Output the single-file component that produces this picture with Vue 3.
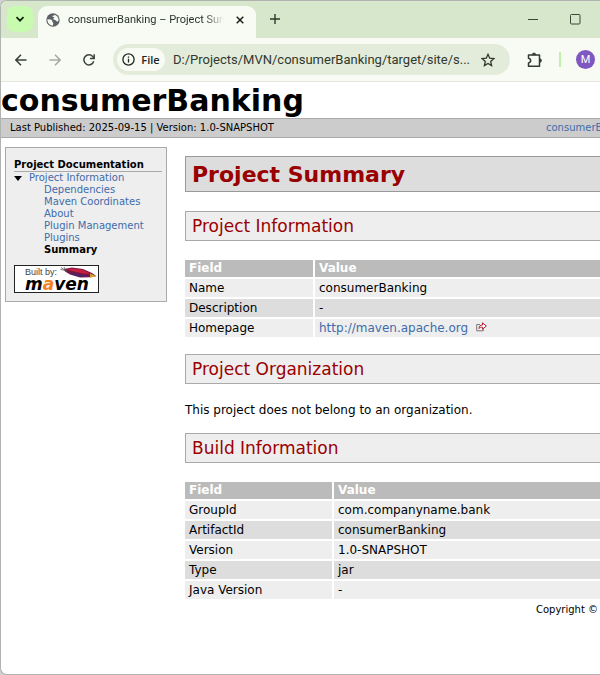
<template>
  <div class="window">
    <div class="tab-strip">
      <button class="tab-search" aria-label="Search tabs">
        <svg width="10" height="10" viewBox="0 0 10 10">
          <path d="M1.5 3.2 5 6.7 8.5 3.2" fill="none" stroke="#10220c" stroke-width="1.7" />
        </svg>
      </button>
      <div class="tab">
        <svg width="14" height="14" viewBox="0 0 14 14">
          <circle cx="7" cy="7" r="6.7" fill="#5c6166" />
          <path
            d="M1.4 6.2 4.6 6.6c1 .2 1.7.6 1.7 1.6v.8c.9.2 1 .7.9 1.4l-.3 2.1C3.7 12.4 1.2 9.6 1.4 6.2z"
            fill="#f8fbf3"
          />
          <path
            d="M8.6 1.7c2.4.8 4 2.8 4 5.5-.2.9-.7 1.3-1.5 1.2-.9-.1-.9-.9-1.5-1.2-.8-.4-2-.2-2.2-1.2-.2-1 .9-1.1.9-1.9-.6-.4-1.7 0-1.8-.8 0-.9 1.3-.5 1.8-.8z"
            fill="#f8fbf3"
          />
        </svg>
        <span class="tab-title">consumerBanking – Project Summary</span>
        <button class="tab-close" aria-label="Close tab">
          <svg width="8" height="8" viewBox="0 0 8 8">
            <path d="M.7.7 7.3 7.3M7.3.7.7 7.3" stroke="#1b1f1a" stroke-width="1.5" />
          </svg>
        </button>
      </div>
      <button class="new-tab" aria-label="New tab">
        <svg width="10" height="10" viewBox="0 0 10 10">
          <path d="M5 0v10M0 5h10" stroke="#2c3a28" stroke-width="1.4" />
        </svg>
      </button>
      <div class="window-buttons">
        <button aria-label="Minimize">
          <svg width="10" height="10" viewBox="0 0 10 10">
            <path d="M0 5.5h10" stroke="#3b4737" />
          </svg>
        </button>
        <button aria-label="Maximize">
          <svg width="11" height="11" viewBox="0 0 11 11">
            <rect x=".5" y=".5" width="9.5" height="9.5" rx="1" fill="none" stroke="#3b4737" />
          </svg>
        </button>
      </div>
    </div>

    <div class="toolbar">
      <button class="nav-btn" aria-label="Back">
        <svg width="12" height="12" viewBox="0 0 12 12">
          <path d="M11.5 6H1M6 .8.9 6 6 11.2" fill="none" stroke="#3a4137" stroke-width="1.5" />
        </svg>
      </button>
      <button class="nav-btn" aria-label="Forward">
        <svg width="12" height="12" viewBox="0 0 12 12">
          <path d="M.5 6H11M6 .8 11.1 6 6 11.2" fill="none" stroke="#a5aaa1" stroke-width="1.5" />
        </svg>
      </button>
      <button class="nav-btn" aria-label="Reload">
        <svg width="12" height="12" viewBox="0 0 12 12">
          <path d="M10.7 7.3A5 5 0 1 1 9.7 2.6L11 4" fill="none" stroke="#3a4137" stroke-width="1.5" />
          <path d="M11.2.3V4.5H7" fill="none" stroke="#3a4137" stroke-width="1.5" />
        </svg>
      </button>
      <div class="omnibox">
        <button class="file-chip">
          <svg width="13" height="13" viewBox="0 0 13 13">
            <circle cx="6.5" cy="6.5" r="5.6" fill="none" stroke="#20261e" stroke-width="1.3" />
            <path d="M6.5 5.8v3.7M6.5 3.4v1.4" stroke="#20261e" stroke-width="1.3" />
          </svg>
          File
        </button>
        <input v-model="url" class="url" type="text" aria-label="Address" />
        <button class="star" aria-label="Bookmark this page">
          <svg width="14" height="14" viewBox="0 0 14 14">
            <path
              d="M7 1.3l1.7 3.9 4.2.4-3.2 2.8.9 4.2L7 10.4l-3.6 2.2.9-4.2L1.1 5.6l4.2-.4z"
              fill="none"
              stroke="#333b30"
              stroke-width="1.3"
            />
          </svg>
        </button>
      </div>
      <button class="extensions" aria-label="Extensions">
        <svg width="16" height="16" viewBox="0 0 16 16">
          <path
            d="M1.5 3h11v11.2h-11V11c2.9-.5 2.9-4.3 0-4.8z"
            fill="none"
            stroke="#333b30"
            stroke-width="1.5"
            stroke-linejoin="round"
          />
          <path d="M5.2 2.8a1.8 1.8 0 0 1 3.6 0zM12.7 6.7a1.8 1.8 0 0 1 0 3.6z" fill="#333b30" stroke="#333b30" stroke-width=".7" />
        </svg>
      </button>
      <span class="divider"></span>
      <button class="avatar" aria-label="Profile">M</button>
    </div>

    <div class="page">
      <div class="banner">consumerBanking</div>
      <div class="breadcrumbs">
        <span>Last Published: 2025-09-15 | Version: 1.0-SNAPSHOT</span>
        <div class="crumb-right"><a href="#">consumerBanking</a></div>
      </div>

      <div class="columns">
        <nav class="left-column">
          <h5>Project Documentation</h5>
          <ul>
            <li>
              <svg class="arrow" width="8" height="5" viewBox="0 0 8 5">
                <path d="M0 0h8L4 5z" fill="#000" />
              </svg>
              <a href="#">Project Information</a>
              <ul>
                <li v-for="item in menu" :key="item">
                  <a href="#">{{ item }}</a>
                </li>
                <li><strong>Summary</strong></li>
              </ul>
            </li>
          </ul>
          <a href="#" class="powered" aria-label="Built by Maven">
            <svg width="85" height="28" viewBox="0 0 85 28">
              <rect x=".5" y=".5" width="84" height="27" fill="#fff" stroke="#222" />
              <text x="11" y="10" class="built">Built by:</text>
              <path d="M50 4l8-1.5 11 1.5 9 4 4 3-5 1.3-11 .3-10-3-5-3z" fill="#7c1546" />
              <path d="M53 4l6-.6 10 1.6 8 4-8-.6-11-2.5z" fill="#c51f3a" />
              <path d="M56 7.2l12 2.9 9 .9-10 1-9-2.4z" fill="#47246b" />
              <path d="M76 8.5l7 3-7 1.1z" fill="#d5a12e" />
              <path d="M47 2.5l6 4M50 2l2.5 5M46.5 4.5l5 .8" stroke="#555" stroke-width=".8" />
              <text x="11" y="25" class="maven">m<tspan fill="#f58220">a</tspan>ven</text>
            </svg>
          </a>
        </nav>

        <main class="body-column">
          <h1>Project Summary</h1>
          <h2>Project Information</h2>
          <table class="project">
            <thead>
              <tr>
                <th>Field</th>
                <th>Value</th>
              </tr>
            </thead>
            <tbody>
              <tr v-for="row in projectRows" :key="row.field">
                <td>{{ row.field }}</td>
                <td v-if="row.link">
                  <a href="#">{{ row.value }}</a>
                  <svg class="external" width="11" height="10" viewBox="0 0 11 10">
                    <path d="M4 2.5H.7v6.3h6.6V7" fill="none" stroke="#777" />
                    <path d="M3 6.5C3 4 4.5 3 6.5 3V.8L10.3 4 6.5 7.2V5.2C5 5 4 5.3 3 6.5z" fill="#fff" stroke="#b02030" />
                  </svg>
                </td>
                <td v-else>{{ row.value }}</td>
              </tr>
            </tbody>
          </table>

          <h2>Project Organization</h2>
          <p>This project does not belong to an organization.</p>

          <h2>Build Information</h2>
          <table class="build">
            <thead>
              <tr>
                <th>Field</th>
                <th>Value</th>
              </tr>
            </thead>
            <tbody>
              <tr v-for="row in buildRows" :key="row.field">
                <td>{{ row.field }}</td>
                <td>{{ row.value }}</td>
              </tr>
            </tbody>
          </table>
        </main>
      </div>

      <footer>Copyright ©</footer>
    </div>
  </div>
</template>

<script setup>
import { ref } from "vue";

const url = ref("D:/Projects/MVN/consumerBanking/target/site/s...");

const menu = [
  "Dependencies",
  "Maven Coordinates",
  "About",
  "Plugin Management",
  "Plugins",
];

const projectRows = [
  { field: "Name", value: "consumerBanking" },
  { field: "Description", value: "-" },
  { field: "Homepage", value: "http://maven.apache.org", link: true },
];

const buildRows = [
  { field: "GroupId", value: "com.companyname.bank" },
  { field: "ArtifactId", value: "consumerBanking" },
  { field: "Version", value: "1.0-SNAPSHOT" },
  { field: "Type", value: "jar" },
  { field: "Java Version", value: "-" },
];
</script>

<style>
body {
  background: #d0d0d0;
}
</style>

<style scoped>
* {
  box-sizing: border-box;
}
.window {
  min-height: 100vh;
  display: flex;
  flex-direction: column;
  border: 1px solid #b0b4ae;
  border-right: none;
  border-radius: 7px 0 0 7px;
  background: #fff;
  overflow: hidden;
  font-family: Verdana, "DejaVu Sans", sans-serif;
}
button {
  display: flex;
  align-items: center;
  justify-content: center;
  padding: 0;
  border: none;
  background: none;
  flex-shrink: 0;
}
svg {
  flex-shrink: 0;
}
a {
  color: #3f6cab;
  text-decoration: none;
}

/* browser chrome */
.tab-strip {
  display: flex;
  height: 37px;
  padding: 5px 0 0 6px;
  background: #d6e7cb;
  font-family: "Segoe UI", Roboto, sans-serif;
}
.tab-search {
  width: 26px;
  height: 26px;
  border-radius: 8px;
  background: #c8fab0;
}
.tab {
  display: flex;
  align-items: center;
  width: 218px;
  margin-left: 5px;
  padding: 0 8px 5px;
  border-radius: 9px 9px 0 0;
  background: #f8fbf3;
}
.tab-title {
  flex: 1;
  min-width: 0;
  margin-left: 8px;
  overflow: hidden;
  white-space: nowrap;
  font-size: 11px;
  line-height: 16px;
  color: #2a3327;
  mask-image: linear-gradient(to right, #000 88%, transparent);
}
.tab-close {
  width: 16px;
  height: 16px;
  margin-left: 8px;
}
.new-tab {
  width: 26px;
  height: 26px;
  margin-left: 6px;
}
.window-buttons {
  display: flex;
  gap: 16px;
  margin-left: auto;
  padding-right: 12px;
}
.window-buttons button {
  width: 26px;
  height: 26px;
}
.toolbar {
  display: flex;
  align-items: center;
  height: 44px;
  padding: 0 5px 0 7px;
  border-bottom: 1px solid #e3e8df;
  background: #f8fbf3;
  font-family: "Segoe UI", Roboto, sans-serif;
}
.nav-btn {
  width: 26px;
  height: 26px;
  margin-right: 8px;
}
.omnibox {
  display: flex;
  flex: 1;
  align-items: center;
  min-width: 0;
  height: 31px;
  margin-left: 3px;
  padding: 0 15px 0 4px;
  border-radius: 16px;
  background: #e3ecdb;
}
.file-chip {
  gap: 6px;
  width: 48px;
  height: 23px;
  border-radius: 12px;
  background: #f8fbf3;
  font-family: "Segoe UI", "Open Sans", sans-serif;
  font-size: 11px;
  font-weight: 600;
  color: #20261e;
}
.url {
  flex: 1;
  min-width: 0;
  margin-left: 8px;
  padding: 0;
  border: none;
  outline: none;
  background: none;
  font-family: inherit;
  font-size: 13px;
  line-height: 20px;
  color: #30382d;
}
.extensions {
  width: 26px;
  height: 26px;
  margin-left: 12px;
}
.divider {
  width: 2px;
  height: 15px;
  margin: 0 15px 0 11px;
  background: #c0efab;
}
.avatar {
  width: 19px;
  height: 19px;
  border-radius: 50%;
  background: #7e57c2;
  color: #fff;
  font-family: Roboto, sans-serif;
  font-size: 11px;
}

/* generated site */
.banner {
  height: 36px;
  font-size: 30px;
  font-weight: bold;
  line-height: 38px;
  white-space: nowrap;
}
.breadcrumbs {
  display: flex;
  justify-content: space-between;
  height: 20px;
  padding-left: 9px;
  border-top: 1px solid #aaa;
  border-bottom: 1px solid #aaa;
  background: #ccc;
  font-size: 10px;
  line-height: 18px;
  white-space: nowrap;
}
.crumb-right {
  width: 54px;
}
.columns {
  display: flex;
  align-items: flex-start;
  gap: 18px;
  padding: 9px 0 0 4px;
}
.left-column {
  flex: 0 0 162px;
  padding: 11px 4px 8px 8px;
  border: 1px solid #aaa;
  background: #eee;
  font-size: 10px;
  line-height: 12px;
}
.left-column h5 {
  margin: 0;
  border-bottom: 1px solid #aaa;
  font-size: 10px;
  line-height: 12px;
}
.left-column ul {
  margin: 0;
  padding: 0 0 0 15px;
  list-style: none;
}
.left-column li {
  position: relative;
  white-space: nowrap;
}
.arrow {
  position: absolute;
  left: -15px;
  top: 4px;
}
.powered {
  display: block;
  width: 85px;
  height: 28px;
  margin-top: 9px;
}
.powered svg {
  display: block;
}
.built {
  font-family: "Liberation Sans", Arial, sans-serif;
  font-size: 9px;
  fill: #444;
}
.maven {
  font-family: "DejaVu Sans", sans-serif;
  font-size: 17px;
  font-style: italic;
  font-weight: bold;
}
.body-column {
  flex: 1;
  min-width: 0;
  padding-top: 9px;
  font-size: 12px;
}
h1,
h2 {
  margin: 0 -1px 19px 0;
  padding-left: 6px;
  border: 1px solid #aaa;
  color: #900;
}
h1 {
  height: 36px;
  border-color: #999;
  background: #ddd;
  font-size: 22px;
  line-height: 36px;
}
h2 {
  height: 30px;
  background: #eee;
  font-size: 17px;
  font-weight: normal;
  line-height: 29px;
}
table {
  width: 100%;
  margin-bottom: 15px;
  border-collapse: separate;
  border-spacing: 0;
  table-layout: fixed;
}
th,
td {
  height: 20px;
  padding: 0 4px;
  border-bottom: 2px solid #fff;
  text-align: left;
  line-height: 18px;
}
th {
  height: 19px;
  background: #bbb;
  color: #fff;
  line-height: 17px;
}
th:first-child,
td:first-child {
  border-right: 2px solid #fff;
}
td {
  background: #eee;
}
tbody tr:nth-child(even) td {
  background: #ddd;
}
.project th:first-child {
  width: 130px;
}
.build th:first-child {
  width: 149px;
}
.build {
  margin-bottom: 0;
}
.external {
  margin-left: 8px;
}
p {
  margin: 0 0 16px;
  line-height: 14px;
}
footer {
  display: flex;
  justify-content: flex-end;
  padding-right: 2px;
  font-size: 10px;
  line-height: 18px;
  white-space: nowrap;
}
</style>
